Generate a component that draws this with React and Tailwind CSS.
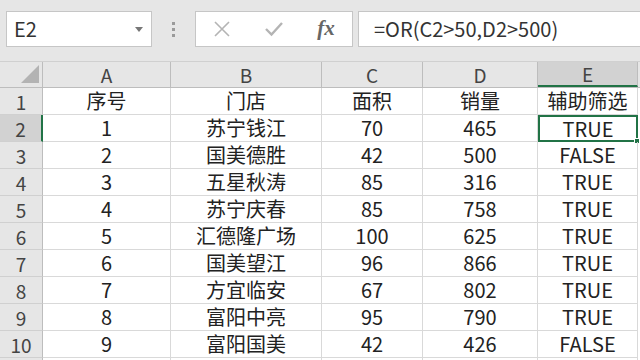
import React from "react";

const cols = [
  { k: "A", w: "w-[128px]" },
  { k: "B", w: "w-[151px]" },
  { k: "C", w: "w-[101px]" },
  { k: "D", w: "w-[115px]" },
  { k: "E", w: "w-[100px]" },
];

const rows = [
  ["序号", "门店", "面积", "销量", "辅助筛选"],
  ["1", "苏宁钱江", "70", "465", "TRUE"],
  ["2", "国美德胜", "42", "500", "FALSE"],
  ["3", "五星秋涛", "85", "316", "TRUE"],
  ["4", "苏宁庆春", "85", "758", "TRUE"],
  ["5", "汇德隆广场", "100", "625", "TRUE"],
  ["6", "国美望江", "96", "866", "TRUE"],
  ["7", "方宜临安", "67", "802", "TRUE"],
  ["8", "富阳中亮", "95", "790", "TRUE"],
  ["9", "富阳国美", "42", "426", "FALSE"],
  ["", "", "", "", ""],
];

const font = { fontFamily: '"Noto Sans CJK SC", "Noto Sans", sans-serif' };

export default function App() {
  return (
    <div className="w-[640px] h-[360px] overflow-hidden bg-white text-[#222]" style={font}>
      {/* top bar */}
      <div className="h-[62px] bg-[#e6e6e6] flex items-start pt-[11px] pl-[6px] border-b border-[#d0d0d0]">
        <div className="w-[146px] h-[36px] bg-white border border-[#c6c6c6] flex items-center justify-between pl-[7px] pr-[8px]">
          <span className="text-[20px] leading-none text-[#333]">E2</span>
          <svg width="8" height="5" viewBox="0 0 8 5"><path d="M0 0 L8 0 L4 5 Z" fill="#777" /></svg>
        </div>
        <div className="w-[43px] h-[36px] flex flex-col items-center justify-center gap-[3px]">
          <div className="w-[3px] h-[3px] bg-[#9a9a9a]" />
          <div className="w-[3px] h-[3px] bg-[#9a9a9a]" />
          <div className="w-[3px] h-[3px] bg-[#9a9a9a]" />
        </div>
        <div className="w-[158px] h-[36px] bg-white border border-[#c6c6c6] flex items-center">
          <div className="w-[52px] flex justify-center">
            <svg width="18" height="18" viewBox="0 0 18 18"><path d="M2 2 L16 16 M16 2 L2 16" stroke="#b4b4b4" strokeWidth="1.6" /></svg>
          </div>
          <div className="w-[52px] flex justify-center">
            <svg width="20" height="16" viewBox="0 0 20 16"><path d="M2 8 L7.5 13.5 L18 2" stroke="#b4b4b4" strokeWidth="2.4" fill="none" /></svg>
          </div>
          <div className="w-[52px] flex justify-center">
            <span className="text-[21px] italic text-[#666] font-semibold" style={{ fontFamily: '"Liberation Serif", serif' }}>fx</span>
          </div>
        </div>
        <div className="ml-[5px] flex-1 h-[36px] bg-white border border-[#c6c6c6] border-r-0 flex items-center pl-[15px]">
          <span className="text-[20px] leading-none text-[#333]">=OR(C2&gt;50,D2&gt;500)</span>
        </div>
      </div>
      {/* column header */}
      <div className="flex h-[26px] bg-[#e6e6e6] border-b border-[#bdbdbd]">
        <div className="w-[43px] h-full relative border-r border-[#bdbdbd]">
          <svg className="absolute right-[3px] bottom-[4px]" width="18" height="18" viewBox="0 0 18 18"><path d="M18 0 L18 18 L0 18 Z" fill="#b3b3b3" /></svg>
        </div>
        {cols.map((c) => (
          <div
            key={c.k}
            className={`${c.w} h-full flex items-center justify-center text-[19px] leading-none text-[#444] border-r ${c.k === "E" ? "bg-[#d2d2d2] border-[#bdbdbd] border-b-2 border-b-[#217346]" : "border-[#bdbdbd]"}`}
          >
            {c.k}
          </div>
        ))}
      </div>
      {/* rows */}
      {rows.map((r, i) => (
        <div key={i} className="flex h-[27px]">
          <div
            className={`w-[43px] h-full flex items-center justify-center text-[19px] leading-none text-[#444] border-b border-[#d0d0d0] ${i === 1 ? "bg-[#d2d2d2] border-r-2 border-r-[#217346]" : "bg-[#e6e6e6] border-r border-r-[#bdbdbd]"}`}
          >
            {i < 10 ? i + 1 : ""}
          </div>
          {r.map((v, j) => {
            const sel = i === 1 && j === 4;
            return (
              <div
                key={j}
                className={`${cols[j].w} h-full flex items-center justify-center text-[20px] leading-none text-[#222] relative ${sel ? "border-2 border-[#217346]" : "border-r border-b border-[#d9d9d9]"}`}
              >
                {v}
                {sel && <div className="absolute right-[-4px] bottom-[-4px] w-[6px] h-[6px] bg-[#217346] border border-white" />}
              </div>
            );
          })}
        </div>
      ))}
    </div>
  );
}
